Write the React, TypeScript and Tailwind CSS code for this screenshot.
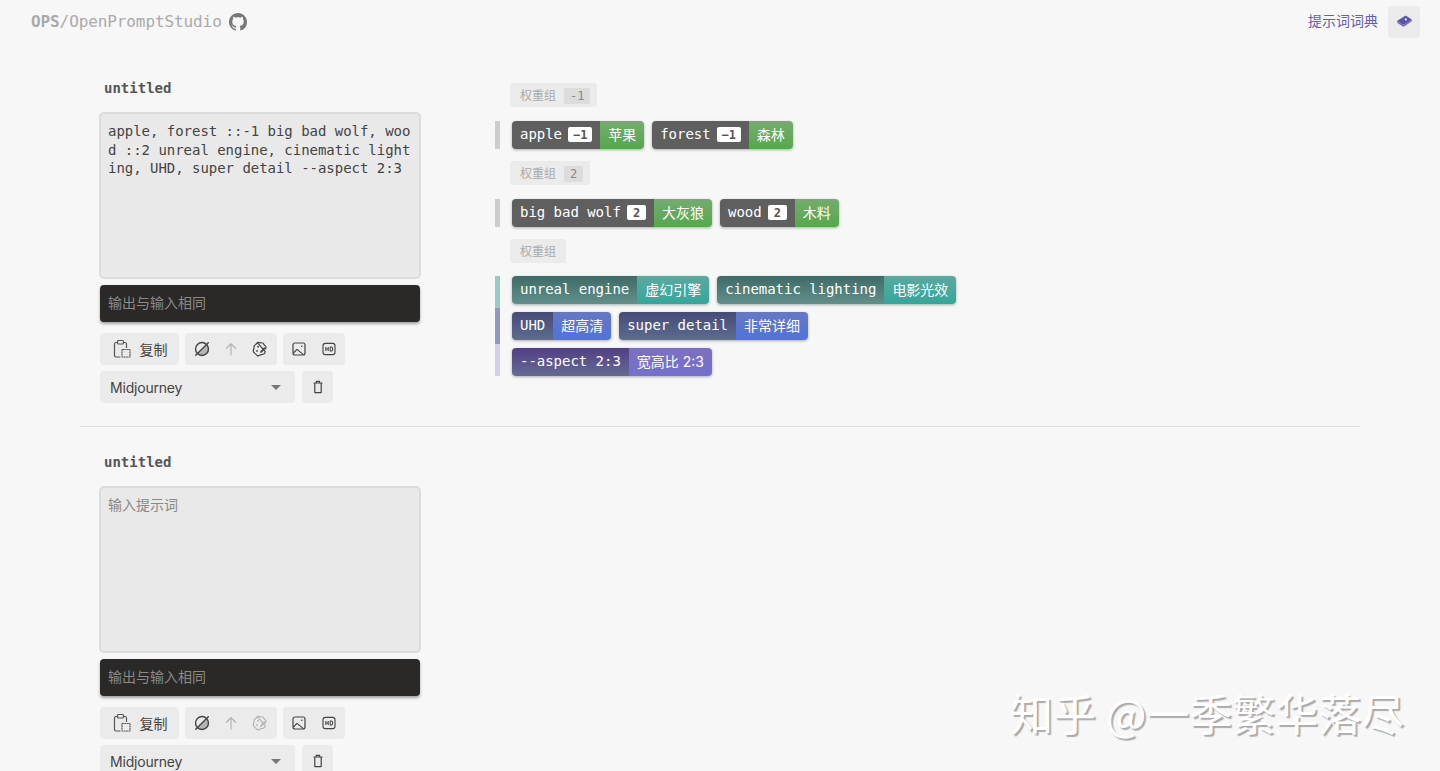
import React from "react";

const MONO = "font-['DejaVu_Sans_Mono',monospace]";
const SANS = "font-['Inter','Noto_Sans_CJK_SC',sans-serif]";

function Icon({ children, className = "text-[#444]" }: { children: React.ReactNode; className?: string }) {
  return (
    <svg viewBox="0 0 24 24" width="18" height="18" fill="none" stroke="currentColor" strokeWidth="1.6" strokeLinecap="round" strokeLinejoin="round" className={className}>
      {children}
    </svg>
  );
}

const ClipboardDashed = () => (
  <svg viewBox="0 0 20 20" width="20" height="20" fill="none" stroke="#555" strokeWidth="1.2" strokeLinecap="round" strokeLinejoin="round">
    <path d="M5.500 3.500H4A1.500 1.500 0 0 0 2.500 5v11.500A1.500 1.500 0 0 0 4 18h4" />
    <path d="M11.500 3.500H13A1.500 1.500 0 0 1 14.500 5v3.500" />
    <rect x="5.500" y="1.500" width="6" height="3.500" rx="1" />
    <rect x="10" y="10.500" width="8" height="7.500" rx="0.500" strokeDasharray="1 1.400" />
  </svg>
);

const Slash = () => (
  <svg viewBox="0 0 20 20" width="18" height="18" fill="none" stroke="#444" strokeWidth="1.5" strokeLinecap="round">
    <path d="M15.600 4.400A7.800 7.800 0 0 1 4.400 15.600Z" fill="#b5b5b5" stroke="none" />
    <circle cx="10" cy="10" r="7.200" />
    <path d="M17 3 3 17" />
  </svg>
);

const ArrowUp = () => (
  <Icon className="text-[#b4b4b4]">
    <path d="M12 20V5M6 11l6-6 6 6" />
  </Icon>
);

const Dice = ({ muted }: { muted?: boolean }) => (
  <Icon className={muted ? "text-[#b4b4b4]" : "text-[#444]"}>
    <path d="M8.500 3.500c1.800-1 3.200.4 5 .2 1.600-.2 3.200.5 3.600 2 .3 1.200 2.400 1.900 2.800 3.800.2 1-.2 1.700-.6 2.300" />
    <path d="M19 15.500c-.2 1.300-.6 2.500-1.800 3.200-1.500.9-2.700 0-4.200.9-1.400.8-2.800 2-4.500 1.300-1.700-.7-1.600-2.300-3.200-3C4.500 17.200 3 16.500 3 14.500c0-1.800 1.300-2.800 1-4.500-.2-1.600.4-3 2-3.600.9-.4 1.500-2 2.500-2.900Z" />
    <path d="m12.500 15 5-5.500 2 1.500-5 5.500-2.500.5Z" fill="currentColor" stroke="none" />
    <circle cx="9.500" cy="9" r="1.200" fill="currentColor" stroke="none" />
    <circle cx="8" cy="14.500" r="1.200" fill="currentColor" stroke="none" />
  </Icon>
);

const ImageIcon = () => (
  <svg viewBox="0 0 20 20" width="16" height="16" fill="none" stroke="#444" strokeWidth="1.500" strokeLinejoin="round">
    <rect x="2.500" y="2.500" width="15" height="15" rx="2.500" />
    <path d="m3 15 4.500-4.500 8 6.500" />
    <circle cx="13.500" cy="6.500" r="1" fill="#444" stroke="none" />
  </svg>
);

const HdIcon = () => (
  <svg viewBox="0 0 20 20" width="16" height="16" fill="none" stroke="#444" strokeWidth="1.400" strokeLinejoin="round">
    <rect x="2.500" y="3" width="15" height="14" rx="3" />
    <path d="M6 7.500v5M9 7.500v5M6 10h3M11.500 7.500v5h1.200a1.800 1.800 0 0 0 1.800-1.800v-1.400a1.800 1.800 0 0 0-1.800-1.800Z" strokeWidth="1.300" />
  </svg>
);

const Trash = () => (
  <svg viewBox="0 0 20 20" width="16" height="16" fill="none" stroke="#444" strokeWidth="1.500" strokeLinejoin="round" strokeLinecap="round">
    <path d="M5 5h10M8 5V3h4v2M6 5v12h8V5" />
  </svg>
);

const Github = () => (
  <svg viewBox="0 0 16 16" width="18" height="18" fill="#777">
    <path d="M8 0C3.580 0 0 3.580 0 8c0 3.540 2.290 6.530 5.470 7.590.4.070.55-.17.55-.38 0-.19-.01-.82-.01-1.490-2.010.37-2.530-.49-2.690-.94-.09-.23-.48-.94-.82-1.130-.28-.15-.68-.52-.01-.53.63-.01 1.080.58 1.230.82.72 1.210 1.870.87 2.330.66.07-.52.28-.87.51-1.070-1.780-.2-3.640-.89-3.640-3.950 0-.87.31-1.590.82-2.150-.08-.2-.36-1.020.08-2.120 0 0 .67-.21 2.200.82.64-.18 1.320-.27 2-.27.68 0 1.360.09 2 .27 1.530-1.040 2.200-.82 2.200-.82.44 1.100.16 1.920.08 2.120.51.56.82 1.270.82 2.150 0 3.070-1.870 3.750-3.650 3.950.29.25.54.73.54 1.480 0 1.070-.01 1.930-.01 2.200 0 .21.15.46.55.38A8.013 8.013 0 0 0 16 8c0-4.420-3.580-8-8-8z" />
  </svg>
);

const Book = () => (
  <svg viewBox="0 0 20 20" width="17" height="17">
    <path d="M1.500 9 10.500 3.500c.6-.3 1.200-.3 1.800 0L18.500 7.500l-8.500 6c-.8.500-1.600.500-2.400 0Z" fill="#5b52a8" />
    <path d="M1.500 9v2.500l6 4c1 .6 1.800.6 2.500.1l8.500-6V7.500l-8.500 6c-.8.500-1.600.500-2.400 0Z" fill="#6f68b6" />
    <circle cx="11.500" cy="7.500" r="1.300" fill="#f0f0f0" />
  </svg>
);

function Editor({ value, muted }: { value: string; muted?: boolean }) {
  return (
    <div className="w-[322px] shrink-0 flex flex-col">
      <div className={`${MONO} ml-[5px] h-[24px] text-[14px] leading-[24px] font-bold text-[#555]`}>untitled</div>
      <textarea
        readOnly
        value={value}
        placeholder="输入提示词"
        className={`${MONO} mt-[12px] h-[167px] w-[322px] resize-none rounded-[5px] border-2 border-[#dcdcdc] bg-[#e9e9e9] py-[8px] pr-[8px] pl-[7px] text-[14px] leading-[18.500px] tracking-[-0.030px] break-all text-[#444] outline-none placeholder:font-['Inter','Noto_Sans_CJK_SC',sans-serif] placeholder:text-[#888]`}
      />
      <div className={`${SANS} mt-[6px] ml-[1px] h-[37px] w-[320px] rounded-[4px] bg-[#2a2927] px-[8px] text-[14px] leading-[36px] text-[#8a8a86] shadow-[0_2px_3px_rgba(0,0,0,0.35)]`}>
        输出与输入相同
      </div>
      <div className="mt-[11px] ml-[1px] flex gap-[6px]">
        <button className={`${SANS} flex h-[32px] w-[79px] items-center justify-center gap-[8px] rounded-[4px] bg-[#ebebeb] text-[14px] text-[#444]`}>
          <ClipboardDashed />
          复制
        </button>
        <div className="flex h-[32px] w-[92px] items-center justify-around rounded-[4px] bg-[#ebebeb] px-[2px]">
          <Slash />
          <ArrowUp />
          <Dice muted={muted} />
        </div>
        <div className="flex h-[32px] w-[62px] items-center justify-around rounded-[4px] bg-[#ebebeb] px-[1px]">
          <ImageIcon />
          <HdIcon />
        </div>
      </div>
      <div className="mt-[6px] ml-[1px] flex gap-[7px]">
        <div className={`${SANS} flex h-[32px] w-[195px] items-center justify-between rounded-[4px] bg-[#ebebeb] pr-[14px] pl-[10px] text-[14px] tracking-[-0.200px] text-[#444]`}>
          Midjourney
          <span className="h-0 w-0 border-x-[5px] border-t-[5px] border-x-transparent border-t-[#777]" />
        </div>
        <div className="flex h-[32px] w-[31px] items-center justify-center rounded-[4px] bg-[#ebebeb]">
          <Trash />
        </div>
      </div>
    </div>
  );
}

function GroupLabel({ weight }: { weight?: string }) {
  return (
    <div className={`${SANS} ml-[15px] flex h-[24px] w-fit items-center gap-[8px] rounded-[3px] bg-[#ebebeb] pt-[1px] pl-[10px] text-[12px] text-[#aaaaaa] ${weight ? "pr-[7px]" : "pr-[10px]"}`}>
      <span>权重组</span>
      {weight && <span className={`${MONO} flex h-[16px] items-center rounded-[2px] bg-[#dcdcdc] px-[6px] text-[12px] text-[#888]`}>{weight}</span>}
    </div>
  );
}

type ChipData = { en: string; zh: string; w?: string };

function Chip({ en, zh, w, left, right }: ChipData & { left: string; right: string }) {
  return (
    <div className="flex h-[28px] overflow-hidden rounded-[4px] shadow-[0_1px_3px_rgba(0,0,0,0.3)]">
      <div className={`${MONO} flex items-center gap-[6.200px] px-[8px] pb-[1px] text-[14px] tracking-[-0.030px] whitespace-pre text-white ${left}`}>
        {en}
        {w && (
          <span className={`flex h-[15px] items-center justify-center rounded-[2px] bg-white text-[12px] font-bold text-[#555] ${w === "2" ? "w-[19px]" : "w-[24px]"}`}>
            {w}
          </span>
        )}
      </div>
      <div className={`${SANS} flex items-center px-[8px] pb-[1px] text-[14px] whitespace-pre text-white ${right}`}>{zh}</div>
    </div>
  );
}

function Row({ bar, pad, children }: { bar: string; pad: string; children: React.ReactNode }) {
  return (
    <div className="flex gap-[12px]">
      <div className={`w-[5px] ${bar}`} />
      <div className={`flex gap-[8px] ${pad}`}>{children}</div>
    </div>
  );
}

const GRAY = "bg-[#5f5f5f]";
const GREEN = "bg-gradient-to-b from-[#74ac6e] to-[#55a84c]";
const TEAL_L = "bg-gradient-to-b from-[#3f6b67] to-[#61908b]";
const TEAL_R = "bg-gradient-to-b from-[#5ba89f] to-[#2fa89d]";
const BLUE_L = "bg-gradient-to-b from-[#464b78] to-[#5c6c8e]";
const BLUE_R = "bg-gradient-to-b from-[#6678c4] to-[#4f72dd]";
const PURPLE_L = "bg-gradient-to-b from-[#523f83] to-[#666a94]";
const PURPLE_R = "bg-gradient-to-b from-[#7c6fc0] to-[#7470cf]";

export default function App() {
  return (
    <div className="relative h-screen overflow-hidden bg-[#f7f7f7]">
      <header className="flex h-[42px] items-center justify-between pr-[20px] pl-[31px]">
        <div className="mt-[2px] flex items-center gap-[7px]">
          <div className={`${MONO} text-[16px] tracking-[-0.100px] text-[#aaaaaa]`}>
            <span className="font-bold">OPS</span>/OpenPromptStudio
          </div>
          <Github />
        </div>
        <div className="flex items-center gap-[10px]">
          <span className={`${SANS} mb-[1px] text-[14px] text-[#6360ad]`}>提示词词典</span>
          <div className="mt-[1px] flex h-[32px] w-[32px] items-center justify-center rounded-[4px] bg-[#ebebeb]">
            <Book />
          </div>
        </div>
      </header>

      <main className="mx-[80px]">
        <section className="box-content flex h-[350px] border-b border-[#e0e0e0] pt-[34px] pl-[19px]">
          <Editor value="apple, forest ::-1 big bad wolf, wood ::2 unreal engine, cinematic lighting, UHD, super detail --aspect 2:3" />
          <div className="ml-[74px] flex flex-col pt-[7px]">
            <GroupLabel weight="-1" />
            <div className="mt-[14px]">
              <Row bar="bg-[#cccccc]" pad="">
                <Chip en="apple" w="−1" zh="苹果" left={GRAY} right={GREEN} />
                <Chip en="forest" w="−1" zh="森林" left={GRAY} right={GREEN} />
              </Row>
            </div>
            <div className="mt-[12px]"><GroupLabel weight="2" /></div>
            <div className="mt-[14px]">
              <Row bar="bg-[#cccccc]" pad="">
                <Chip en="big bad wolf" w="2" zh="大灰狼" left={GRAY} right={GREEN} />
                <Chip en="wood" w="2" zh="木料" left={GRAY} right={GREEN} />
              </Row>
            </div>
            <div className="mt-[12px]"><GroupLabel /></div>
            <div className="mt-[13px]">
              <Row bar="bg-[#98cbc4]" pad="pb-[4px]">
                <Chip en="unreal engine" zh="虚幻引擎" left={TEAL_L} right={TEAL_R} />
                <Chip en="cinematic lighting" zh="电影光效" left={TEAL_L} right={TEAL_R} />
              </Row>
              <Row bar="bg-[#9297c4]" pad="py-[4px]">
                <Chip en="UHD" zh="超高清" left={BLUE_L} right={BLUE_R} />
                <Chip en="super detail" zh="非常详细" left={BLUE_L} right={BLUE_R} />
              </Row>
              <Row bar="bg-[#d5d0ea]" pad="pt-[4px]">
                <Chip en="--aspect 2:3" zh="宽高比 2:3" left={PURPLE_L} right={PURPLE_R} />
              </Row>
            </div>
          </div>
        </section>
        <section className="flex pt-[23px] pl-[19px]">
          <Editor value="" muted />
        </section>
      </main>

      <div className="absolute top-[683px] left-[1010px] font-['Noto_Sans_CJK_SC',sans-serif] text-[43px] leading-[58px] whitespace-pre text-white [text-shadow:2px_2px_1px_#aaaaaa]">
        知乎 @一季繁华落尽
      </div>
    </div>
  );
}
